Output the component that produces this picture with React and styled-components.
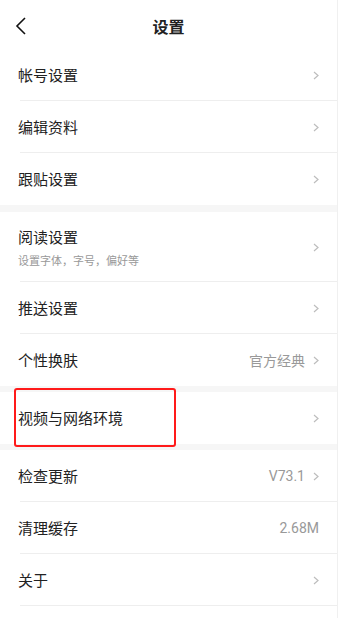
import React from "react";
import styled, { createGlobalStyle } from "styled-components";

const Global = createGlobalStyle`
  html, body { margin: 0; padding: 0; background: #fff; }
  body { font-family: "Noto Sans CJK SC", "Noto Sans", sans-serif; -webkit-font-smoothing: antialiased; }
`;

const Page = styled.div`
  width: 337px;
  min-height: 618px;
  border-right: 1px solid #f0f0f0;
  background: #fff;
`;

const Header = styled.header`
  height: 49px;
  display: grid;
  grid-template-columns: 40px 1fr 40px;
  align-items: center;
`;

const BackButton = styled.div`
  display: flex;
  align-items: center;
  justify-content: flex-start;
  padding-left: 15px;
  height: 100%;
  padding-top: 2px;
`;

const Title = styled.h1`
  margin: 0;
  text-align: center;
  font-size: 16px;
  font-weight: 700;
  color: #222;
  line-height: 1;
  padding-top: 3px;
`;

const Section = styled.section``;

const Band = styled.div`
  height: ${(p) => p.$h}px;
  background: #f6f6f6;
`;

const Row = styled.div`
  position: relative;
  height: ${(p) => p.$h || 52}px;
  display: flex;
  align-items: center;
  padding: 0 18px 0 18px;
  box-sizing: border-box;
  &::after {
    content: "";
    display: ${(p) => (p.$divider ? "block" : "none")};
    position: absolute;
    left: 20px;
    right: 0;
    bottom: 0;
    height: 1px;
    background: #eeeeee;
  }
`;

const Labels = styled.div`
  flex: 1;
  display: flex;
  flex-direction: column;
  gap: 6px;
`;

const Label = styled.div`
  font-size: 15px;
  color: #222;
  line-height: 20px;
`;

const Sub = styled.div`
  font-size: 11px;
  color: #999;
  line-height: 14px;
`;

const Right = styled.div`
  display: flex;
  align-items: center;
  gap: 8px;
  padding-right: ${(p) => (p.$noArrow ? 0 : 0)}px;
`;

const Value = styled.span`
  font-size: 14px;
  color: #999;
  font-family: ${(p) => (p.$latin ? '"Roboto", "Noto Sans", sans-serif' : 'inherit')};
`;

const Highlight = styled.div`
  position: absolute;
  left: 14px;
  top: -4px;
  width: 162px;
  height: 59px;
  border: 2px solid #ff1a1a;
  border-radius: 3px;
  box-sizing: border-box;
  pointer-events: none;
`;

const Chevron = () => (
  <svg width="6" height="9" viewBox="0 0 6 9">
    <path d="M1 1 L5 4.5 L1 8" fill="none" stroke="#bdbdbd" strokeWidth="1.2" />
  </svg>
);

const BackIcon = () => (
  <svg width="12" height="18" viewBox="0 0 12 18">
    <path d="M10 1 L2 9 L10 17" fill="none" stroke="#111" strokeWidth="1.6" />
  </svg>
);

const Item = ({ label, sub, value, arrow = true, divider = true, h, latin, children }) => (
  <Row $h={h} $divider={divider}>
    {children}
    <Labels>
      <Label>{label}</Label>
      {sub && <Sub>{sub}</Sub>}
    </Labels>
    <Right>
      {value && <Value $latin={latin}>{value}</Value>}
      {arrow && <Chevron />}
    </Right>
  </Row>
);

export default function App() {
  return (
    <>
      <Global />
      <Page>
        <Header>
          <BackButton>
            <BackIcon />
          </BackButton>
          <Title>设置</Title>
          <div />
        </Header>
        <Section>
          <Item label="帐号设置" />
          <Item label="编辑资料" />
          <Item label="跟贴设置" divider={false} />
        </Section>
        <Band $h={7} />
        <Section>
          <Item label="阅读设置" sub="设置字体，字号，偏好等" h={70} />
          <Item label="推送设置" />
          <Item label="个性换肤" value="官方经典" divider={false} />
        </Section>
        <Band $h={6} />
        <Section>
          <Item label="视频与网络环境" divider={false}>
            <Highlight />
          </Item>
        </Section>
        <Band $h={6} />
        <Section>
          <Item label="检查更新" value="V73.1" latin />
          <Item label="清理缓存" value="2.68M" latin arrow={false} />
          <Item label="关于" />
        </Section>
      </Page>
    </>
  );
}
